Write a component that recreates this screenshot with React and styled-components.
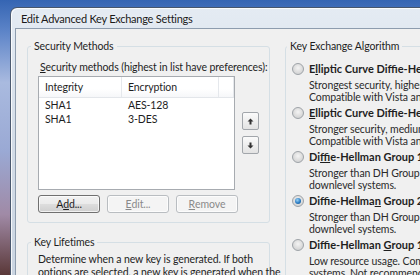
import React from 'react';
import styled, { createGlobalStyle } from 'styled-components';

const GlobalStyle = createGlobalStyle`
  html, body {
    margin: 0;
    height: 100%;
    overflow: hidden;
  }
  body {
    background: linear-gradient(180deg, #3565b3 0%, #5f86c9 12%, #a9badf 30%, #9aa9d4 55%, #a08aa6 78%, #5a3838 100%);
    font-family: Lato, "Liberation Sans", sans-serif;
    color: #1e1e1e;
  }
`;

const Desktop = styled.div`
  padding: 7px 0 0 10px;
`;

const Window = styled.div`
  width: 640px;
  height: 300px;
  border: 1px solid rgba(28, 44, 70, 0.75);
  border-right: none;
  border-radius: 7px 0 0 0;
  background: linear-gradient(180deg, #e4ebf3 0%, #d3dce7 45%, #c8d3e0 100%);
  box-shadow: inset 1px 1px 0 rgba(255, 255, 255, 0.8);
  padding-left: 4px;
`;

const TitleBar = styled.div`
  height: 20px;
  display: flex;
  align-items: center;
  padding-left: 6px;
  font-size: 11px;
  letter-spacing: -0.25px;
  color: #1a1a1a;
  text-shadow: 0 0 6px rgba(255, 255, 255, 0.9);
`;

const Content = styled.div`
  height: 270px;
  background: #f0f0f0;
  border: 1px solid #8d9cae;
  border-right: none;
  padding: 10px 0 0 11px;
  display: flex;
  align-items: flex-start;
  gap: 15px;
  font-size: 10.5px;
  letter-spacing: -0.1px;
`;

const Column = styled.div`
  width: ${p => p.$width}px;
  display: flex;
  flex-direction: column;
  flex-shrink: 0;
`;

const Group = styled.fieldset`
  margin: ${p => p.$top || 0}px 0 0;
  border: 1px solid #d5dfe5;
  border-radius: 3px;
  padding: ${p => p.$pad};
  min-width: 0;
`;

const Legend = styled.legend`
  padding: 0 3px;
  margin-left: ${p => p.$shift}px;
  line-height: 14px;
`;

const Label = styled.div`
  line-height: 14px;
  margin-left: 2px;
  white-space: nowrap;
`;

const ListRow = styled.div`
  display: flex;
  align-items: flex-start;
  gap: 7px;
  margin-top: 2px;
`;

const ListBox = styled.div`
  width: 201px;
  height: 114px;
  box-sizing: border-box;
  border: 1px solid #a7abb0;
  background: #fff;
`;

const HeaderRow = styled.div`
  display: grid;
  grid-template-columns: 83px 97px 1fr;
  height: 21px;
  border-bottom: 1px solid #e3e6ea;
  box-sizing: border-box;
`;

const HeaderCell = styled.div`
  display: flex;
  align-items: center;
  padding-left: 6px;
  border-right: 1px solid #e5e8ec;
  background: linear-gradient(180deg, #ffffff 0%, #ffffff 60%, #f6f7f9 100%);
`;

const DataRow = styled.div`
  display: grid;
  grid-template-columns: 83px 97px 1fr;
  height: 14px;
  line-height: 14px;
`;

const DataCell = styled.div`
  padding-left: 6px;
`;

const MoveButtons = styled.div`
  display: flex;
  flex-direction: column;
  gap: 6px;
  margin-top: 36px;
`;

const IconButton = styled.div`
  width: 17px;
  height: 18px;
  box-sizing: border-box;
  border: 1px solid #a2a6ab;
  border-radius: 2px;
  background: linear-gradient(180deg, #fbfbfb 0%, #efefef 50%, #e3e3e3 100%);
  display: flex;
  align-items: center;
  justify-content: center;
`;

const ButtonRow = styled.div`
  display: flex;
  gap: 7px;
  margin-top: 5px;
`;

const Button = styled.div`
  width: 62px;
  height: 18px;
  box-sizing: border-box;
  border-radius: 3px;
  display: flex;
  align-items: center;
  justify-content: center;
  border: 1px solid ${p => (p.$disabled ? '#b9bdc1' : '#707070')};
  color: ${p => (p.$disabled ? '#8a8a8a' : '#1e1e1e')};
  background: ${p =>
    p.$disabled
      ? '#f4f4f4'
      : 'linear-gradient(180deg, #f2f2f2 0%, #ebebeb 48%, #dddddd 52%, #cfcfcf 100%)'};
  box-shadow: inset 0 0 0 1px rgba(255, 255, 255, 0.7);
`;

const Text = styled.div`
  line-height: 12.5px;
  white-space: nowrap;
`;

const Option = styled.div`
  display: flex;
  align-items: flex-start;
  gap: 5px;
  margin-top: ${p => (p.$first ? 0 : 3)}px;
`;

const OptionBody = styled.div`
  display: flex;
  flex-direction: column;
`;

const OptionTitle = styled.div`
  font-size: 11px;
  letter-spacing: 0;
  font-weight: 700;
  line-height: 14px;
  white-space: nowrap;
  margin-bottom: 3px;
`;

const OptionDesc = styled.div`
  line-height: 12px;
  white-space: nowrap;
  color: #2a2a2a;
`;

const Radio = styled.div`
  width: 12px;
  height: 12px;
  flex-shrink: 0;
  margin-top: 1px;
  box-sizing: border-box;
  border-radius: 50%;
  border: 1px solid #9ea3a8;
  background: radial-gradient(circle at 50% 40%, #f4f4f4 0%, #dcdcdc 55%, #c9cbcd 100%);
  display: flex;
  align-items: center;
  justify-content: center;
  &::after {
    content: '';
    width: 6px;
    height: 6px;
    border-radius: 50%;
    display: ${p => (p.$checked ? 'block' : 'none')};
    background: radial-gradient(circle at 40% 35%, #9bd3f5 0%, #2b7cc4 55%, #0d4a86 100%);
  }
`;

function Arrow({ down }) {
  return (
    <svg width="7" height="7" viewBox="0 0 7 7" style={down ? { transform: 'rotate(180deg)' } : null}>
      <path d="M3.5 0.5 L6.5 3.5 L4.5 3.5 L4.5 6.5 L2.5 6.5 L2.5 3.5 L0.5 3.5 Z" fill="#333" />
    </svg>
  );
}

const methods = [
  ['SHA1', 'AES-128'],
  ['SHA1', '3-DES'],
];

const algorithms = [
  {
    title: <>E<u>l</u>liptic Curve Diffie-Hellman P-384</>,
    lines: ['Strongest security, highest resource usage.', 'Compatible with Vista and newer systems only.'],
  },
  {
    title: <><u>E</u>lliptic Curve Diffie-Hellman P-256</>,
    lines: ['Stronger security, medium resource usage.', 'Compatible with Vista and newer systems only.'],
  },
  {
    title: <>Di<u>f</u>fie-Hellman Group 14</>,
    lines: ['Stronger than DH Group 2. Compatible with', 'downlevel systems.'],
  },
  {
    title: <>Diffie-Hellma<u>n</u> Group 2</>,
    lines: ['Stronger than DH Group 1. Compatible with', 'downlevel systems.'],
    checked: true,
  },
  {
    title: <>Diffie-Hellman <u>G</u>roup 1</>,
    lines: ['Low resource usage. Compatible with downlevel', 'systems. Not recommended.'],
  },
];

export default function App() {
  return (
    <>
      <GlobalStyle />
      <Desktop>
        <Window>
          <TitleBar>Edit Advanced Key Exchange Settings</TitleBar>
          <Content>
            <Column $width={243}>
              <Group $pad="7px 10px 9px">
                <Legend $shift={-7}>Security Methods</Legend>
                <Label><u>S</u>ecurity methods (highest in list have preferences):</Label>
                <ListRow>
                  <ListBox>
                    <HeaderRow>
                      <HeaderCell>Integrity</HeaderCell>
                      <HeaderCell>Encryption</HeaderCell>
                      <HeaderCell />
                    </HeaderRow>
                    {methods.map(([integrity, encryption], i) => (
                      <DataRow key={i}>
                        <DataCell>{integrity}</DataCell>
                        <DataCell>{encryption}</DataCell>
                      </DataRow>
                    ))}
                  </ListBox>
                  <MoveButtons>
                    <IconButton><Arrow /></IconButton>
                    <IconButton><Arrow down /></IconButton>
                  </MoveButtons>
                </ListRow>
                <ButtonRow>
                  <Button>A<u>d</u>d...</Button>
                  <Button $disabled><u>E</u>dit...</Button>
                  <Button $disabled><u>R</u>emove</Button>
                </ButtonRow>
              </Group>
              <Group $top={12} $pad="4px 10px 9px">
                <Legend $shift={-7}>Key Lifetimes</Legend>
                <Text>Determine when a new key is generated. If both</Text>
                <Text>options are selected, a new key is generated when the</Text>
                <Text>first threshold is reached.</Text>
              </Group>
            </Column>
            <Column $width={330}>
              <Group $pad="9px 6px 9px">
                <Legend $shift={-5}>Key Exchange Algorithm</Legend>
                {algorithms.map((a, i) => (
                  <Option key={i} $first={i === 0}>
                    <Radio $checked={a.checked} />
                    <OptionBody>
                      <OptionTitle>{a.title}</OptionTitle>
                      {a.lines.map((line, j) => (
                        <OptionDesc key={j}>{line}</OptionDesc>
                      ))}
                    </OptionBody>
                  </Option>
                ))}
              </Group>
            </Column>
          </Content>
        </Window>
      </Desktop>
    </>
  );
}
